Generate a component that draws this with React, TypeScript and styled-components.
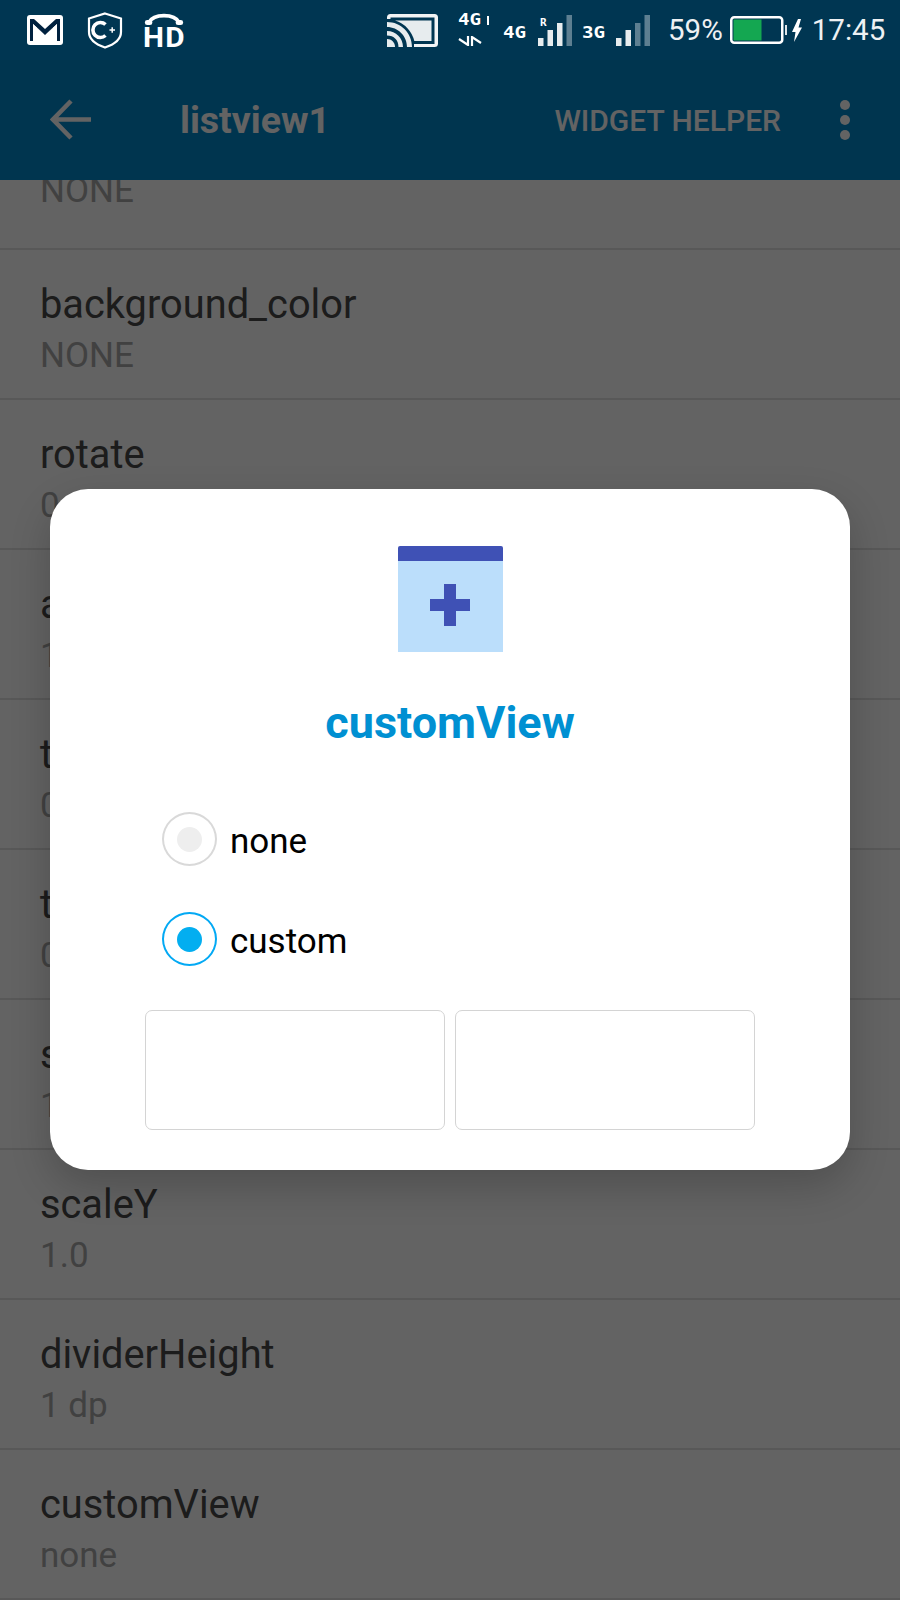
import { createGlobalStyle, styled } from "styled-components";

const GlobalStyle = createGlobalStyle`
  html, body {
    margin: 0;
    padding: 0;
    background: #fff;
    font-family: Roboto, "Liberation Sans", sans-serif;
  }
  body {
    overflow: hidden;
  }
`;

const Page = styled.div`
  position: relative;
  width: 900px;
  height: 1600px;
  overflow: hidden;
  background: #fff;
`;

const StatusBar = styled.div`
  position: relative;
  z-index: 3;
  height: 60px;
  background: #003652;
  display: flex;
  align-items: center;
  color: #fff;
`;

const StatusLeft = styled.div`
  display: flex;
  align-items: center;
  padding-left: 27px;
  gap: 24px;
  width: 360px;
`;

const StatusRight = styled.div`
  display: flex;
  align-items: center;
`;

const StatusItem = styled.div<{ $left?: number; $top?: number }>`
  display: flex;
  margin-left: ${(p) => p.$left ?? 0}px;
  margin-top: ${(p) => p.$top ?? 0}px;
`;

const HdBadge = styled.div`
  display: flex;
  flex-direction: column;
  align-items: center;
  width: 42px;
  margin-left: -4px;
  height: 36px;
`;

const HdText = styled.span`
  font-size: 27px;
  font-weight: 700;
  line-height: 19px;
  letter-spacing: 1px;
  margin-top: 3px;
  transform: scaleX(1.1);
`;

const NetworkStack = styled.div`
  display: flex;
  flex-direction: column;
  gap: 10px;
  width: 36px;
  margin-left: 20px;
`;

const NetworkTop = styled.div`
  display: flex;
  align-items: center;
  gap: 5px;
`;

const Tick = styled.span`
  width: 2px;
  height: 9px;
  background: #fff;
`;

const NetLabel = styled.span<{ $left?: number; $top?: number }>`
  display: block;
  width: 24px;
  font-family: "DejaVu Sans Mono", monospace;
  font-size: 16px;
  font-weight: 700;
  line-height: 12px;
  transform: scaleX(1.2);
  transform-origin: left center;
  margin-left: ${(p) => p.$left ?? 0}px;
  margin-top: ${(p) => p.$top ?? 0}px;
`;

const StatusText = styled.span<{ $left?: number }>`
  font-size: 29.5px;
  line-height: 34px;
  color: #eef1f3;
  margin-left: ${(p) => p.$left ?? 0}px;
`;

const AppBar = styled.header`
  position: relative;
  z-index: 1;
  height: 120px;
  background: #0088cc;
  display: flex;
  align-items: center;
  color: #fff;
`;

const BackButton = styled.div`
  width: 180px;
  padding-left: 50px;
  box-sizing: border-box;
  display: flex;
`;

const AppTitle = styled.h1`
  flex: 1;
  margin: 0;
  font-size: 37.5px;
  font-weight: 700;
`;

const AppAction = styled.span`
  font-size: 30px;
  font-weight: 500;
  margin-right: 59px;
`;

const MoreDots = styled.div`
  display: flex;
  flex-direction: column;
  gap: 5px;
  margin-right: 50px;
`;

const Dot = styled.span`
  width: 10px;
  height: 10px;
  border-radius: 50%;
  background: #fff;
`;

const List = styled.div`
  margin-top: -80px;
`;

const Row = styled.div<{ $top: number }>`
  height: 150px;
  box-sizing: border-box;
  padding: ${(p) => p.$top}px 40px 0;
  border-bottom: 2px solid #e2e2e2;
`;

const Label = styled.div`
  font-size: 39.8px;
  line-height: 46px;
  min-height: 46px;
  color: #484848;
`;

const Value = styled.div`
  font-size: 35px;
  line-height: 46px;
  margin-top: 5px;
  color: #a8a8a8;
`;

const Scrim = styled.div`
  position: absolute;
  inset: 0;
  z-index: 2;
  background: rgba(0, 0, 0, 0.61);
`;

const Dialog = styled.div`
  position: absolute;
  z-index: 3;
  left: 50px;
  top: 489px;
  width: 800px;
  height: 681px;
  box-sizing: border-box;
  background: #fff;
  border-radius: 38px;
  box-shadow: 0 16px 40px rgba(0, 0, 0, 0.2);
  padding: 57px 95px 0;
  display: flex;
  flex-direction: column;
`;

const WidgetIcon = styled.div`
  align-self: center;
  width: 105px;
  height: 106px;
  background: #bbdefb;
  display: flex;
  align-items: center;
  justify-content: center;
  padding-bottom: 4px;
  box-sizing: border-box;
  border-top: 15px solid #3f51b5;
  border-radius: 2px 2px 0 0;
`;

const DialogTitle = styled.h2`
  margin: 46px 0 0;
  text-align: center;
  font-size: 45px;
  line-height: 50px;
  font-weight: 700;
  color: #0090d2;
`;

const RadioGroup = styled.div`
  display: flex;
  flex-direction: column;
  gap: 46px;
  margin: 64px 0 0 17px;
`;

const RadioRow = styled.div`
  display: flex;
  align-items: center;
  gap: 13px;
`;

const RadioCircle = styled.span<{ $checked?: boolean }>`
  width: 55px;
  height: 54px;
  box-sizing: border-box;
  border-radius: 50%;
  border: 2px solid ${(p) => (p.$checked ? "#03a9f4" : "#d9d9d9")};
  display: flex;
  align-items: center;
  justify-content: center;

  &::after {
    content: "";
    width: 25px;
    height: 25px;
    border-radius: 50%;
    background: ${(p) => (p.$checked ? "#03aef0" : "#eeeeee")};
  }
`;

const RadioLabel = styled.span`
  font-size: 35px;
  line-height: 40px;
  margin-top: 6px;
  color: #000;
`;

const InputRow = styled.div`
  display: flex;
  gap: 10.5px;
  margin-top: 44px;
`;

const InputBox = styled.div`
  width: 299.5px;
  height: 120px;
  box-sizing: border-box;
  border: 1.5px solid #d4d4d4;
  border-radius: 7px;
`;

const GmailIcon = () => (
  <svg width="36" height="30" viewBox="0 0 36 30">
    <rect width="36" height="30" rx="3" fill="#fff" />
    <path d="M3 26V4h4l11 10L29 4h4v22h-3V9L18 20 6 9v17z" fill="#00213f" />
    <path d="M6 26V9l12 11L30 9v17h-4V13l-8 7-8-7v13z" fill="#fff" />
  </svg>
);

const ShieldIcon = () => (
  <svg width="36" height="37" viewBox="0 0 36 37">
    <path
      d="M18 1.500 34 6.500V20c0 8-7 12.500-16 15.500C9 32.500 2 28 2 20V6.500z"
      fill="none"
      stroke="#fff"
      strokeWidth="2.200"
    />
    <path d="M18.500 12.500a7.500 7.500 0 1 0 0 11" fill="none" stroke="#fff" strokeWidth="3.600" />
    <path d="M22.500 18h5.500M25.200 15.300v5.400" stroke="#fff" strokeWidth="1.500" />
  </svg>
);

const HeadsetArc = () => (
  <svg width="42" height="15" viewBox="0 0 42 15">
    <path d="M5 11C10 1.500 32 1.500 37 11" fill="none" stroke="#fff" strokeWidth="4" />
    <rect x="0.500" y="8.500" width="8" height="5.500" rx="2.600" fill="#fff" />
    <rect x="33.500" y="8.500" width="8" height="5.500" rx="2.600" fill="#fff" />
  </svg>
);

const CastIcon = () => (
  <svg width="51" height="33" viewBox="0 0 51 33">
    <path
      d="M0 5V3.500A3.500 3.500 0 0 1 3.500 0h44A3.500 3.500 0 0 1 51 3.500v26a3.500 3.500 0 0 1-3.500 3.500H27v-3h20.500V3.500H3.500V5z"
      fill="#f2f4f5"
    />
    <path d="M8 6.500H44.500V27H27.300A28 28 0 0 0 8 6.500z" fill="#e7ecee" />
    <path d="M0 8c14 0 25 11 25 25h-5C20 22 11 13 0 13z" fill="#e7ecee" />
    <path d="M0 17c9 0 16 7 16 16h-4.500C11.500 26 7 21.500 0 21.500z" fill="#e7ecee" />
    <path d="M0 25c4.500 0 8 3.500 8 8H0z" fill="#e7ecee" />
  </svg>
);

const ArrowsIcon = () => (
  <svg width="24" height="10" viewBox="0 0 24 10">
    <path d="M1 3l9 6V0M14 10V1l9 6" fill="none" stroke="#fff" strokeWidth="2.200" />
  </svg>
);

const SignalIcon = ({ full, roaming }: { full: number; roaming?: boolean }) => {
  const bars = [
    { x: 0, h: 8 },
    { x: 9.500, h: 16 },
    { x: 19, h: 23 },
    { x: 28.500, h: 31 },
  ];
  return (
    <svg width="34" height="31" viewBox="0 0 34 31">
      {bars.map((bar, i) => (
        <rect
          key={bar.x}
          x={bar.x}
          y={31 - bar.h}
          width="5.500"
          height={bar.h}
          fill={i < full ? "#e7ecee" : "#5d7f91"}
        />
      ))}
      {roaming && (
        <text x="2" y="11" fontFamily="DejaVu Sans Mono, monospace" fontSize="11" fontWeight="700" fill="#fff">
          R
        </text>
      )}
    </svg>
  );
};

const BatteryIcon = () => (
  <svg width="57" height="28" viewBox="0 0 57 28">
    <rect x="1.250" y="1.250" width="51" height="25.500" rx="3" fill="none" stroke="#fff" strokeWidth="2.500" />
    <rect x="3.500" y="3.500" width="28" height="21" fill="#14a751" />
    <rect x="55" y="9" width="2" height="10" fill="#dfe5e8" />
  </svg>
);

const BoltIcon = () => (
  <svg width="10" height="23" viewBox="0 0 10 23">
    <path d="M6 0 0 13h3.500L2 23 10 8.500H6.500L9 0z" fill="#fff" />
  </svg>
);

const ArrowBack = () => (
  <svg width="42" height="42" viewBox="0 0 42 42">
    <path d="M41 20.500H4M21 2 3 20.500 21 39" fill="none" stroke="#fff" strokeWidth="4.500" />
  </svg>
);

const rows = [
  { label: "", value: "NONE", top: 17 },
  { label: "background_color", value: "NONE", top: 32 },
  { label: "rotate", value: "0", top: 32 },
  { label: "alpha", value: "1.0", top: 32 },
  { label: "translationX", value: "0", top: 32 },
  { label: "translationY", value: "0", top: 32 },
  { label: "scaleX", value: "1.0", top: 32 },
  { label: "scaleY", value: "1.0", top: 32 },
  { label: "dividerHeight", value: "1 dp", top: 32 },
  { label: "customView", value: "none", top: 32 },
];

export default function App() {
  return (
    <Page>
      <GlobalStyle />
      <StatusBar>
        <StatusLeft>
          <GmailIcon />
          <ShieldIcon />
          <HdBadge>
            <HeadsetArc />
            <HdText>HD</HdText>
          </HdBadge>
        </StatusLeft>
        <StatusRight>
          <CastIcon />
          <NetworkStack>
            <NetworkTop>
              <NetLabel>4G</NetLabel>
              <Tick />
            </NetworkTop>
            <ArrowsIcon />
          </NetworkStack>
          <NetLabel $left={9} $top={6}>4G</NetLabel>
          <StatusItem $left={11}>
            <SignalIcon full={3} roaming />
          </StatusItem>
          <NetLabel $left={10} $top={6}>3G</NetLabel>
          <StatusItem $left={10}>
            <SignalIcon full={2} />
          </StatusItem>
          <StatusText $left={18}>59%</StatusText>
          <StatusItem $left={7}>
            <BatteryIcon />
          </StatusItem>
          <StatusItem $left={5}>
            <BoltIcon />
          </StatusItem>
          <StatusText $left={10}>17:45</StatusText>
        </StatusRight>
      </StatusBar>
      <AppBar>
        <BackButton>
          <ArrowBack />
        </BackButton>
        <AppTitle>listview1</AppTitle>
        <AppAction>WIDGET HELPER</AppAction>
        <MoreDots>
          <Dot />
          <Dot />
          <Dot />
        </MoreDots>
      </AppBar>
      <List>
        {rows.map((row) => (
          <Row key={row.label} $top={row.top}>
            <Label>{row.label}</Label>
            <Value>{row.value}</Value>
          </Row>
        ))}
      </List>
      <Scrim />
      <Dialog>
        <WidgetIcon>
          <svg width="40" height="42" viewBox="0 0 40 42">
            <path d="M14 0h12v15h14v12H26v15H14V27H0V15h14z" fill="#3f51b5" />
          </svg>
        </WidgetIcon>
        <DialogTitle>customView</DialogTitle>
        <RadioGroup>
          <RadioRow>
            <RadioCircle />
            <RadioLabel>none</RadioLabel>
          </RadioRow>
          <RadioRow>
            <RadioCircle $checked />
            <RadioLabel>custom</RadioLabel>
          </RadioRow>
        </RadioGroup>
        <InputRow>
          <InputBox />
          <InputBox />
        </InputRow>
      </Dialog>
    </Page>
  );
}
